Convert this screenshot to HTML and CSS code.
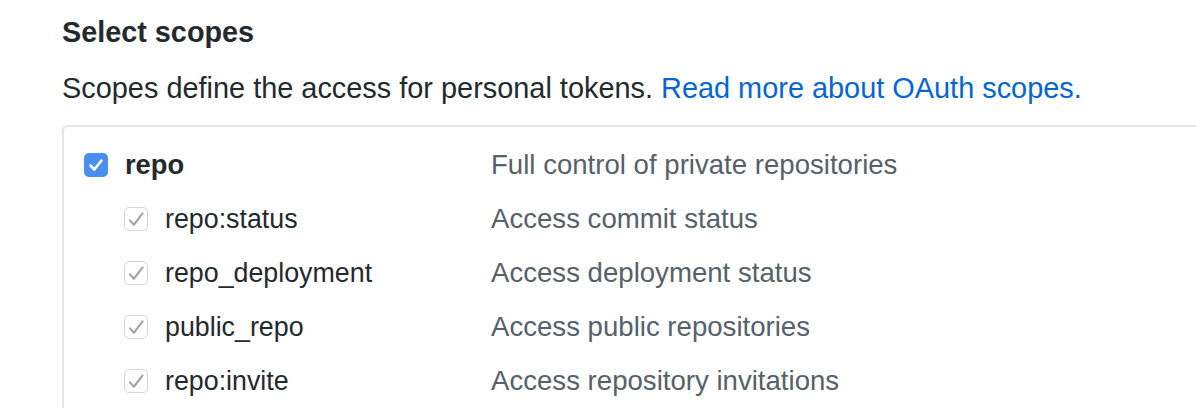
FILE: index.html
```html
<!DOCTYPE html>
<html>
<head>
<meta charset="utf-8">
<link rel="stylesheet" href="styles.css">
</head>
<body>
<div class="page">
  <h3 class="title">Select scopes</h3>
  <p class="lead">Scopes define the access for personal tokens. <a class="link" href="#">Read more about OAuth scopes.</a></p>
  <div class="box">
    <div class="row">
      <div class="name">
        <span class="cb cb-main"><svg viewBox="0 0 24 24" width="24" height="24"><path d="M6.5 12.5l3.8 4L17.5 7.5" fill="none" stroke="#fff" stroke-width="2.6" stroke-linecap="round" stroke-linejoin="round"/></svg></span>
        <strong class="label-main">repo</strong>
      </div>
      <div class="desc">Full control of private repositories</div>
    </div>
    <div class="row sub">
      <div class="name">
        <span class="cb cb-sub"><svg viewBox="0 0 24 24" width="21" height="21"><path d="M4.5 13l4.5 5L19 5" fill="none" stroke="#a3a3a3" stroke-width="2.4" stroke-linecap="round" stroke-linejoin="round"/></svg></span>
        <span class="label">repo:status</span>
      </div>
      <div class="desc">Access commit status</div>
    </div>
    <div class="row sub">
      <div class="name">
        <span class="cb cb-sub"><svg viewBox="0 0 24 24" width="21" height="21"><path d="M4.5 13l4.5 5L19 5" fill="none" stroke="#a3a3a3" stroke-width="2.4" stroke-linecap="round" stroke-linejoin="round"/></svg></span>
        <span class="label">repo_deployment</span>
      </div>
      <div class="desc">Access deployment status</div>
    </div>
    <div class="row sub">
      <div class="name">
        <span class="cb cb-sub"><svg viewBox="0 0 24 24" width="21" height="21"><path d="M4.5 13l4.5 5L19 5" fill="none" stroke="#a3a3a3" stroke-width="2.4" stroke-linecap="round" stroke-linejoin="round"/></svg></span>
        <span class="label">public_repo</span>
      </div>
      <div class="desc">Access public repositories</div>
    </div>
    <div class="row sub">
      <div class="name">
        <span class="cb cb-sub"><svg viewBox="0 0 24 24" width="21" height="21"><path d="M4.5 13l4.5 5L19 5" fill="none" stroke="#a3a3a3" stroke-width="2.4" stroke-linecap="round" stroke-linejoin="round"/></svg></span>
        <span class="label">repo:invite</span>
      </div>
      <div class="desc">Access repository invitations</div>
    </div>
  </div>
</div>
</body>
</html>
```
FILE: styles.css
```css
html, body {
  margin: 0;
  padding: 0;
  background: #fff;
  overflow: hidden;
}
body {
  font-family: "Liberation Sans", Arial, sans-serif;
  font-size: 27px;
  color: #24292e;
  width: 1196px;
  height: 410px;
}
.page {
  padding: 14px 0 0 62px;
  height: 396px;
  overflow: hidden;
}
.title {
  margin: 0;
  font-size: 28.8px;
  font-weight: bold;
  line-height: 36px;
}
.lead {
  margin: 20px 0 0 0;
  font-size: 28.9px;
  line-height: 36px;
}
.link {
  color: #0366d6;
  text-decoration: none;
}
.box {
  margin-top: 19px;
  border: 2px solid #e1e4e8;
  border-right: none;
  border-bottom: none;
  border-radius: 6px 0 0 0;
  padding: 11px 0 0 20px;
}
.row {
  display: flex;
  align-items: center;
  height: 54px;
}
.name {
  display: flex;
  align-items: center;
  width: 407px;
  flex: none;
}
.sub .name {
  padding-left: 40px;
  width: 367px;
}
.cb {
  display: inline-flex;
  align-items: center;
  justify-content: center;
  box-sizing: border-box;
  flex: none;
  margin-right: 17px;
}
.cb-main {
  width: 24px;
  height: 24px;
  border-radius: 5px;
  background: #4a8ef2;
}
.cb-sub {
  width: 24px;
  height: 24px;
  border-radius: 5px;
  border: 1.5px solid #d6d6d6;
  background: #fff;
}
.label {
  font-size: 26.8px;
}
.label-main {
  font-weight: bold;
  font-size: 27.3px;
}
.desc {
  color: #586069;
  font-size: 27.6px;
}
```
